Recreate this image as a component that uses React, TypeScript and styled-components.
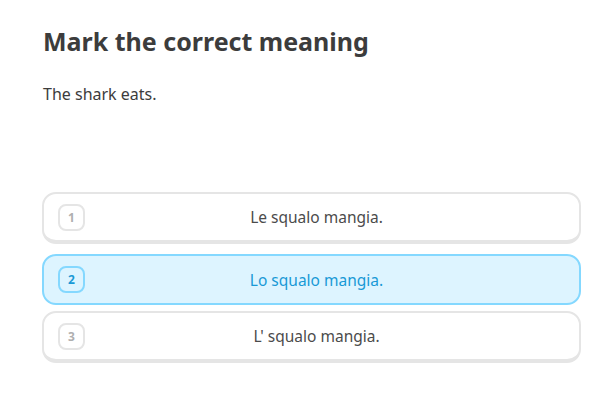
import React, { useState } from 'react';
import styled, { createGlobalStyle, css } from 'styled-components';

const GlobalStyle = createGlobalStyle`
    html, body {
        margin: 0;
        padding: 0;
        background: #ffffff;
    }
    body {
        font-family: 'Noto Sans', 'Open Sans', sans-serif;
        color: #3c3c3c;
    }
`;

const Page = styled.main`
    width: 539px;
    padding: 25px 0 0 42px;
`;

const Title = styled.h1`
    margin: 0 0 0 1px;
    font-size: 25px;
    font-weight: 700;
    line-height: 32px;
    color: #3c3c3c;
`;

const Prompt = styled.p`
    margin: 27px 0 0 1px;
    font-size: 16px;
    line-height: 20px;
    color: #3c3c3c;
`;

const Choices = styled.ul`
    list-style: none;
    margin: 88px 0 0;
    padding: 0;
    display: flex;
    flex-direction: column;
    gap: 8px;
`;

const Choice = styled.li<{ $selected: boolean }>`
    display: flex;
    align-items: center;
    height: 52px;
    box-sizing: border-box;
    padding: 0 31px 0 14px;
    border: 2px solid #e5e5e5;
    border-bottom-width: 4px;
    border-radius: 14px;
    background: #ffffff;
    cursor: pointer;
    ${p =>
        p.$selected &&
        css`
            background: #ddf4ff;
            border-color: #84d8ff;
            border-bottom-width: 2px;
            transform: translateY(2px);
            height: 51px;
        `}
`;

const Badge = styled.span<{ $selected: boolean }>`
    flex: none;
    width: 27px;
    height: 27px;
    box-sizing: border-box;
    display: flex;
    align-items: center;
    justify-content: center;
    border: 2px solid ${p => (p.$selected ? '#84d8ff' : '#e5e5e5')};
    border-radius: 8px;
    font-size: 12px;
    font-weight: 700;
    color: ${p => (p.$selected ? '#1899d6' : '#afafaf')};
`;

const ChoiceText = styled.span<{ $selected: boolean }>`
    flex: 1;
    text-align: center;
    font-size: 15.5px;
    color: ${p => (p.$selected ? '#1899d6' : '#4b4b4b')};
`;

const options = ['Le squalo mangia.', 'Lo squalo mangia.', "L' squalo mangia."];

export default function App() {
    const [selected, setSelected] = useState(1);

    return (
        <>
            <GlobalStyle />
            <Page>
                <Title>Mark the correct meaning</Title>
                <Prompt>The shark eats.</Prompt>
                <Choices>
                    {options.map((text, i) => (
                        <Choice key={text} $selected={i === selected} onClick={() => setSelected(i)}>
                            <Badge $selected={i === selected}>{i + 1}</Badge>
                            <ChoiceText $selected={i === selected}>{text}</ChoiceText>
                        </Choice>
                    ))}
                </Choices>
            </Page>
        </>
    );
}
